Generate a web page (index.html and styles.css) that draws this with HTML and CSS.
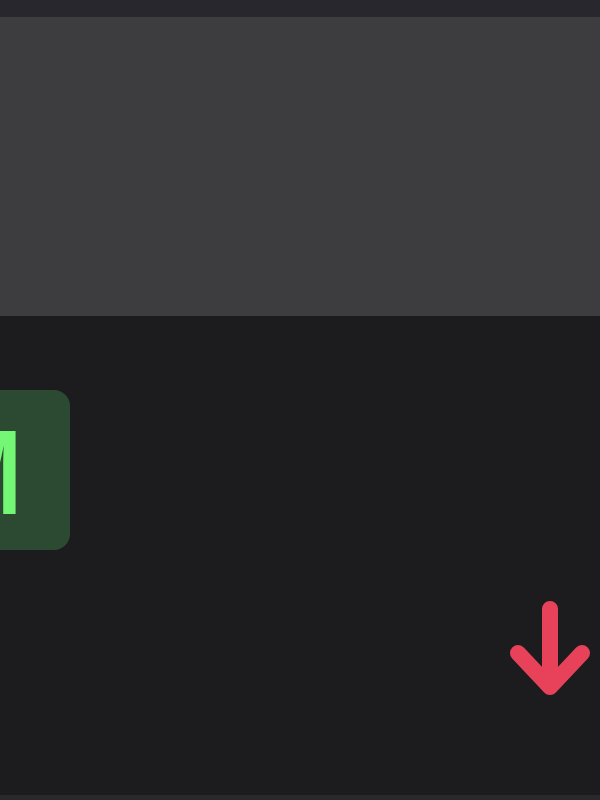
FILE: index.html
```html
<!DOCTYPE html>
<html lang="en">
  <head>
    <meta charset="utf-8">
    <title>Trade</title>
    <link rel="stylesheet" href="styles.css">
  </head>
  <body>
    <div class="page">
        <div class="topbar"></div>
        <div class="banner"></div>
        <div class="content">
            <div class="badge"><span class="badge-text">M</span></div>
            <div class="arrow-row">
                <svg class="arrow" width="84" height="100" viewBox="0 0 84 100">
                    <path d="M42 10 V88 M10 54 L42 88 L74 54" fill="none" stroke="#e8425a" stroke-width="16" stroke-linecap="round" stroke-linejoin="round"/>
                </svg>
            </div>
        </div>
        <div class="bottombar"></div>
    </div>
  </body>
</html>
```

FILE: styles.css
```css
*{
    margin: 0;
    padding: 0;
    box-sizing: border-box;
}
body{
    background: #1c1c1e;
    font-family: "Liberation Sans", Arial, sans-serif;
    overflow: hidden;
}
.page{
    min-height: 100vh;
    display: flex;
    flex-direction: column;
}
.topbar{
    height: 17px;
    background: #28272d;
}
.banner{
    height: 299px;
    background: #3d3d40;
}
.content{
    padding-top: 74px;
    display: flex;
    flex-direction: column;
}
.badge{
    width: 130px;
    height: 160px;
    margin-left: -60px;
    border-radius: 16px;
    background: #2b4a31;
    display: flex;
    align-items: center;
    justify-content: flex-end;
    padding-right: 48px;
    overflow: hidden;
}
.badge-text{
    color: #74f774;
    font-size: 120px;
    font-weight: bold;
    line-height: 1;
    display: inline-block;
    transform: scaleX(0.8);
    transform-origin: right center;
    margin-top: 4px;
}
.arrow-row{
    display: flex;
    justify-content: flex-end;
    padding-right: 8px;
    margin-top: 49px;
}
.bottombar{
    margin-top: auto;
    height: 5px;
    background: #29292b;
}
```
